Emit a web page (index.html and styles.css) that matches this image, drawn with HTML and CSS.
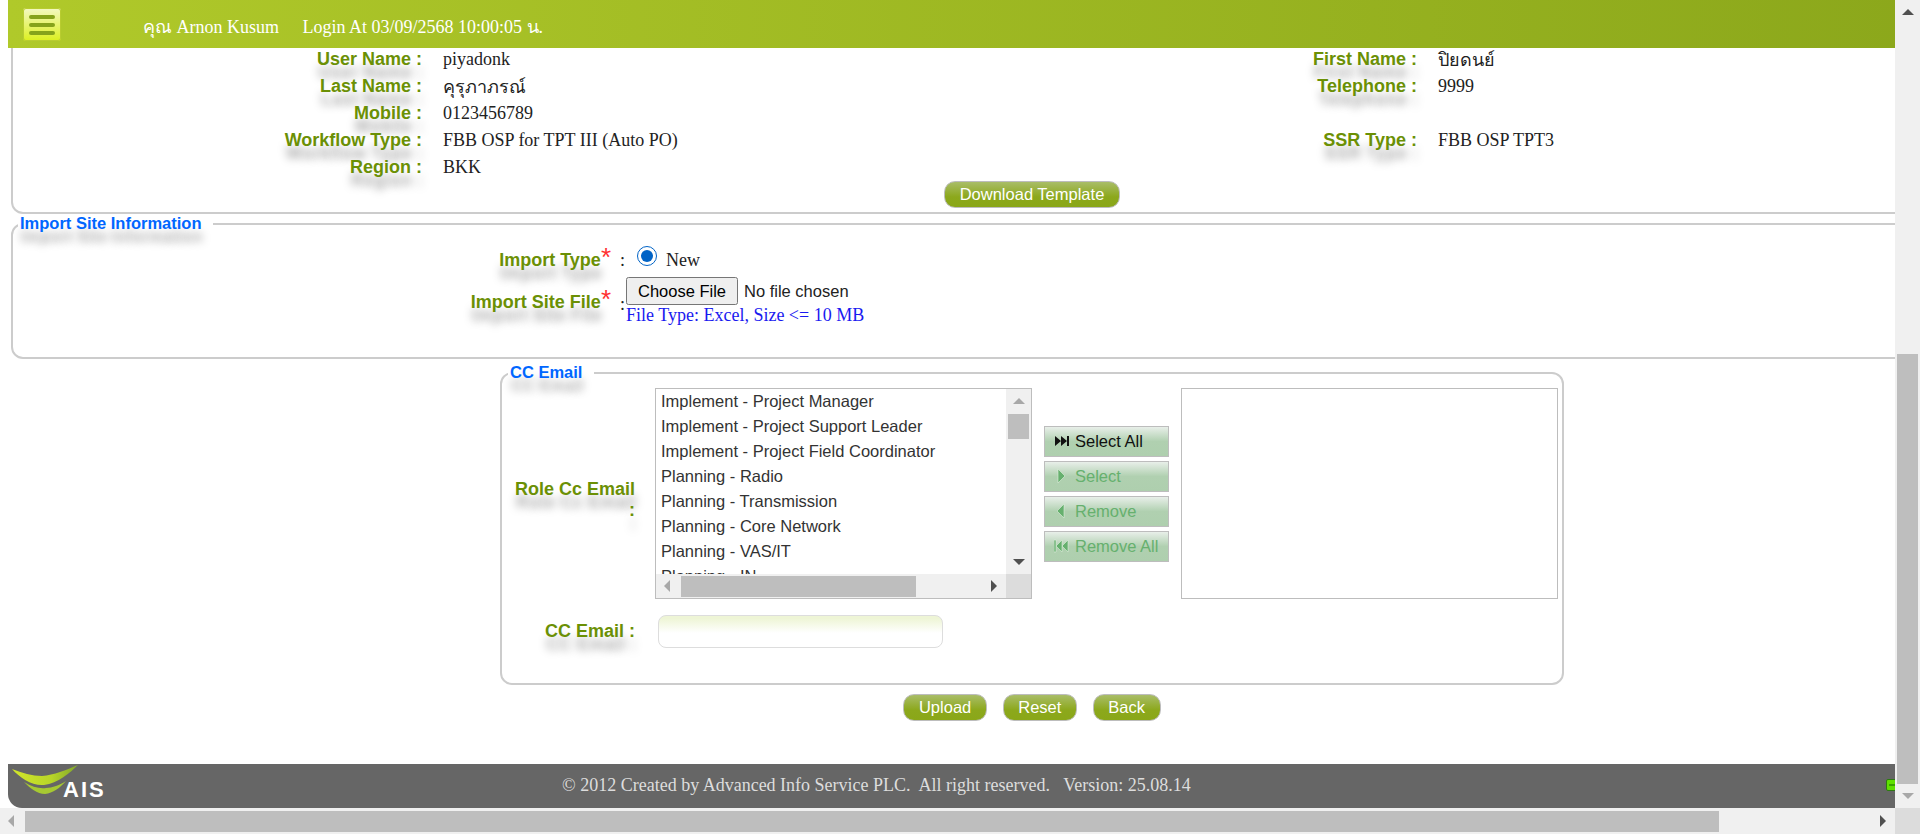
FILE: index.html
```html
<!DOCTYPE html>
<html lang="th">
<head>
  <meta charset="UTF-8">
  <meta name="viewport" content="width=device-width, initial-scale=1.0">
  <title>Import Site</title>
  <link rel="stylesheet" href="styles.css">
</head>
<body>
  <div class="jendela">
    <div class="layar">
      <div class="halaman">
        <div class="header">
          <div class="menu-btn"><span></span><span></span><span></span></div>
          <span class="nama">คุณ Arnon Kusum</span>
          <span class="login">Login At 03/09/2568 10:00:05 น.</span>
        </div>

        <div class="info-box">
          <div class="info-grid">
            <label>User Name :</label><span>piyadonk</span><label>First Name :</label><span>ปิยดนย์</span>
            <label>Last Name :</label><span>คุรุภาภรณ์</span><label>Telephone :</label><span>9999</span>
            <label>Mobile :</label><span>0123456789</span><label></label><span></span>
            <label>Workflow Type :</label><span>FBB OSP for TPT III (Auto PO)</span><label>SSR Type :</label><span>FBB OSP TPT3</span>
            <label>Region :</label><span>BKK</span><label></label><span></span>
          </div>
          <div class="tengah">
            <button class="btn-hijau btn-download">Download Template</button>
          </div>
        </div>

        <fieldset class="kotak kotak-import">
          <legend>Import Site Information</legend>
          <div class="import-grid">
            <label class="lbl-type">Import Type<span class="req">*</span></label>
            <span class="titik titik-type">:</span>
            <div class="nilai-type"><input type="radio" checked name="jenis"><span>New</span></div>
            <label class="lbl-file">Import Site File<span class="req">*</span></label>
            <span class="titik titik-file">:</span>
            <div>
              <input type="file" class="input-file">
              <div class="file-note">File Type: Excel, Size &lt;= 10 MB</div>
            </div>
          </div>
        </fieldset>

        <fieldset class="kotak kotak-cc">
          <legend>CC Email</legend>
          <div class="cc-baris">
            <label class="lbl-role">Role Cc Email :</label>
            <div class="daftar">
              <div class="daftar-isi">
                <div class="opsi">Implement - Project Manager</div>
                <div class="opsi">Implement - Project Support Leader</div>
                <div class="opsi">Implement - Project Field Coordinator</div>
                <div class="opsi">Planning - Radio</div>
                <div class="opsi">Planning - Transmission</div>
                <div class="opsi">Planning - Core Network</div>
                <div class="opsi">Planning - VAS/IT</div>
                <div class="opsi">Planning - IN</div>
              </div>
              <div class="sb-v">
                <i class="pn atas"></i>
                <div class="sb-v-jalur"><div class="sb-v-thumb"></div></div>
                <i class="pn bawah"></i>
              </div>
              <div class="sb-h">
                <i class="pn kiri"></i>
                <div class="sb-h-jalur"><div class="sb-h-thumb"></div></div>
                <i class="pn kanan"></i>
              </div>
              <div class="sudut"></div>
            </div>
            <div class="pindah">
              <button class="btn-pindah aktif">
                <svg width="15" height="14" viewBox="0 0 15 14"><path d="M1 2l6 5-6 5zM7 2l6 5-6 5zM13 2h2v10h-2z" fill="currentColor"/></svg>Select All
              </button>
              <button class="btn-pindah">
                <svg width="15" height="14" viewBox="0 0 15 14"><path d="M4 0l7 7-7 7z" fill="currentColor"/></svg>Select
              </button>
              <button class="btn-pindah">
                <svg width="15" height="14" viewBox="0 0 15 14"><path d="M10 0L3 7l7 7z" fill="currentColor"/></svg>Remove
              </button>
              <button class="btn-pindah">
                <svg width="15" height="14" viewBox="0 0 15 14"><path d="M0 1h2v12H0zM8 1L2 7l6 6zM14 1L8 7l6 6z" fill="currentColor"/></svg>Remove All
              </button>
            </div>
            <div class="daftar-kanan"></div>
          </div>
          <div class="cc-input">
            <label>CC Email :</label>
            <input type="text" class="input-email">
          </div>
        </fieldset>

        <div class="aksi">
          <button class="btn-hijau">Upload</button>
          <button class="btn-hijau">Reset</button>
          <button class="btn-hijau">Back</button>
        </div>

        <div class="footer">
          <svg class="logo" width="100" height="44" viewBox="0 0 100 44">
            <defs>
              <linearGradient id="hijauLogo" x1="0" y1="0" x2="1" y2="0">
                <stop offset="0" stop-color="#d2e62a"/>
                <stop offset="0.6" stop-color="#b8d528"/>
                <stop offset="1" stop-color="#7fa52c"/>
              </linearGradient>
            </defs>
            <path d="M4 5C14 9 24 12 34 12 46 11 58 6 70 1 62 9 50 19 36 21 24 22 12 14 4 5z" fill="url(#hijauLogo)"/>
            <path d="M16 18c8 5 16 7 22 6 6 0 14-3 20-7-6 7-13 12-21 13-8 0-15-6-21-12z" fill="#a6c832"/>
            <text x="55" y="33" class="logo-teks">AIS</text>
          </svg>
          <span class="copy">© 2012 Created by Advanced Info Service PLC.&nbsp; All right reserved. &nbsp; Version: 25.08.14</span>
          <div class="lampu"><span></span></div>
        </div>
      </div>
    </div>

    <div class="sb-utama-v">
      <i class="pn atas"></i>
      <div class="jalur-v"><div class="thumb-v"></div></div>
      <i class="pn bawah pudar"></i>
    </div>
    <div class="sb-utama-h">
      <i class="pn kiri pudar"></i>
      <div class="jalur-h"><div class="thumb-h"></div></div>
      <i class="pn kanan"></i>
    </div>
    <div class="sudut-utama"></div>
  </div>
</body>
</html>
```

FILE: styles.css
```css
html, body {
  margin: 0;
  height: 100%;
  overflow: hidden;
}
body {
  background-color: #ffffff;
  font-family: "Liberation Serif", "Noto Sans", "DejaVu Serif", serif;
  font-size: 18px;
  color: #222;
}
.jendela {
  display: grid;
  grid-template-columns: 1fr 25px;
  grid-template-rows: 1fr 26px;
  width: 1920px;
  height: 834px;
}
.layar {
  overflow: hidden;
}
.halaman {
  width: 2048px;
  padding: 0 8px;
  height: 808px;
  display: flex;
  flex-direction: column;
}

/* header */
.header {
  position: relative;
  z-index: 2;
  flex: none;
  height: 48px;
  display: flex;
  background: linear-gradient(to right, #b0c92a, #89a51a);
  color: #ffffff;
}
.menu-btn {
  width: 38px;
  height: 33px;
  box-sizing: border-box;
  margin: 8px 0 0 15px;
  padding: 7px 6px 0;
  border-radius: 3px;
  background: linear-gradient(to bottom, #f3f8c4, #dcf01e);
  box-shadow: 0 0 0 1px #b8cc30 inset;
}
.menu-btn span {
  display: block;
  height: 4px;
  margin-bottom: 4px;
  border-radius: 2px;
  background-color: #86a31b;
}
.nama {
  margin: 12px 0 0 82px;
  width: 159.5px;
}
.login {
  margin-top: 12px;
}

/* label */
label {
  font-family: "Liberation Sans", Arial, sans-serif;
  font-weight: bold;
  color: #6b9005;
  text-shadow: 1px 13px 8px #aaaaaa;
}
.info-box {
  flex: none;
  margin: -2px 3px 0;
  height: 168px;
  box-sizing: border-box;
  border: 2px solid #cccccc;
  border-top: none;
  border-radius: 0 0 12px 12px;
}
.info-grid {
  display: grid;
  grid-template-columns: 409px 774px 179px 1fr;
  grid-auto-rows: 27px;
  column-gap: 21px;
  align-items: center;
}
.info-grid label {
  text-align: right;
}
.tengah {
  text-align: center;
}
.btn-hijau {
  height: 27px;
  padding: 0 14.5px;
  border: 1px solid #bdbdbd;
  border-radius: 11px;
  background: linear-gradient(to bottom, #a9bd68, #8ca81c 60%, #8aa718);
  color: #ffffff;
  font-family: "Liberation Sans", Arial, sans-serif;
  font-size: 16.5px;
}
.btn-download {
  width: 176px;
  padding: 0;
}

/* fieldset */
.kotak {
  margin: 0;
  padding: 0;
  border: 2px solid #cccccc;
  border-radius: 12px;
  min-width: 0;
}
.kotak legend {
  font-family: "Liberation Sans", Arial, sans-serif;
  font-size: 16.5px;
  font-weight: bold;
  color: #0066ff;
  text-shadow: 1px 13px 8px #aaaaaa;
}
.kotak-import {
  flex: none;
  margin: 0 3px;
  height: 145px;
  box-sizing: border-box;
}
.kotak-import legend {
  margin-left: 5px;
  padding: 0 11px 0 2px;
}
.import-grid {
  display: grid;
  grid-template-columns: 598px 15px 1fr;
  grid-template-rows: 33px auto;
  padding-top: 11px;
}
.import-grid label {
  text-align: right;
}
.req {
  color: #ff3030;
  font-family: "Liberation Sans", Arial, sans-serif;
  font-weight: normal;
  font-size: 26px;
  line-height: 10px;
  text-shadow: none;
}
.titik {
  padding-left: 9px;
  color: #222;
}
.lbl-type, .titik-type {
  padding-top: 6px;
}
.lbl-file {
  padding-top: 15px;
}
.titik-file {
  padding-top: 17px;
}
.nilai-type {
  display: flex;
  align-items: flex-start;
  margin-left: 11px;
}
.nilai-type input {
  width: 20px;
  height: 20px;
  margin: 2px 9px 0 0;
  accent-color: #0063c6;
}
.nilai-type span {
  margin-top: 6px;
}
.input-file {
  display: block;
  font-family: "Liberation Sans", Arial, sans-serif;
  font-size: 16.5px;
  color: #222;
}
.input-file::file-selector-button {
  width: 112px;
  height: 28px;
  margin-right: 6px;
  font: inherit;
}
.file-note {
  color: #1a1af0;
  line-height: 20px;
}
.kotak-cc {
  flex: none;
  width: 1064px;
  height: 322px;
  box-sizing: border-box;
  margin: 4px auto 0;
}
.kotak-cc legend {
  margin-left: 6px;
  padding: 0 12px 0 2px;
}
.cc-baris {
  display: flex;
  align-items: center;
  margin-top: 6px;
}
.lbl-role {
  width: 125px;
  padding: 12px 0 0 8px;
  text-align: right;
  line-height: 21px;
}
.daftar {
  position: relative;
  width: 377px;
  height: 211px;
  box-sizing: border-box;
  margin-left: 20px;
  border: 1px solid #bdbdbd;
  font-family: "Liberation Sans", Arial, sans-serif;
  font-size: 16.5px;
  color: #333;
  display: grid;
  grid-template-columns: 1fr 25px;
  grid-template-rows: 185px 24px;
  overflow: hidden;
}
.daftar-isi {
  overflow: hidden;
  padding: 0 0 0 5px;
}
.opsi {
  height: 25px;
  line-height: 25px;
  white-space: nowrap;
}
.sb-v, .sb-h {
  background-color: #f0f0f0;
  display: flex;
}
.sb-v {
  flex-direction: column;
  align-items: center;
}
.sb-v-jalur, .jalur-v {
  flex: 1;
  width: 100%;
}
.sb-v-thumb {
  width: 21px;
  height: 25px;
  margin: 2px 2px 0;
  background-color: #bebebe;
}
.sb-h {
  align-items: center;
}
.sb-h-jalur {
  flex: 1;
  height: 100%;
}
.sb-h-thumb {
  width: 235px;
  height: 21px;
  margin: 2px 0 0 2px;
  background-color: #bebebe;
}
.sudut, .sudut-utama {
  background-color: #dcdcdc;
}

/* panah scrollbar */
.pn {
  flex: none;
  display: block;
  width: 0;
  height: 0;
  border-style: solid;
  border-color: transparent;
}
.atas {
  margin: 9px 0 8px;
  border-width: 0 6px 6px;
  border-bottom-color: #a8a8a8;
}
.bawah {
  margin: 8px 0 9px;
  border-width: 6px 6px 0;
  border-top-color: #505050;
}
.kiri {
  margin: 0 9px 0 8px;
  border-width: 6px 6px 6px 0;
  border-right-color: #a8a8a8;
}
.kanan {
  margin: 0 9px;
  border-width: 6px 0 6px 6px;
  border-left-color: #505050;
}

/* tombol pindah */
.pindah {
  display: flex;
  flex-direction: column;
  gap: 4px;
  width: 125px;
  margin: 0 12px;
}
.btn-pindah {
  height: 31px;
  padding: 0 0 0 9px;
  display: flex;
  align-items: center;
  gap: 6px;
  border: 1px solid #bdbdbd;
  background: linear-gradient(to bottom, #e8efe9, #b0d0b0 50%, #aecfae);
  color: #66b06e;
  font-family: "Liberation Sans", Arial, sans-serif;
  font-size: 16.5px;
  white-space: nowrap;
}
.btn-pindah svg {
  stroke: #dfeedd;
  stroke-width: 0.6;
}
.btn-pindah.aktif {
  color: #111;
}
.btn-pindah.aktif svg {
  stroke: none;
}
.daftar-kanan {
  width: 377px;
  height: 211px;
  box-sizing: border-box;
  border: 1px solid #bdbdbd;
}
.cc-input {
  display: flex;
  align-items: center;
  margin-top: 16px;
}
.cc-input label {
  width: 133px;
  text-align: right;
}
.input-email {
  width: 285px;
  height: 33px;
  box-sizing: border-box;
  margin-left: 23px;
  border: 1px solid #dddddd;
  border-radius: 8px;
  background: linear-gradient(to bottom, #eef5d6 8%, #ffffff 55%);
}
.aksi {
  flex: none;
  display: flex;
  justify-content: center;
  gap: 16px;
  margin-top: 9px;
}

/* footer */
.footer {
  position: relative;
  flex: none;
  height: 44px;
  margin-top: 43px;
  display: flex;
  background-color: #666666;
  border-radius: 0 0 0 14px;
}
.logo {
  flex: none;
}
.logo-teks {
  font-family: "Liberation Sans", Arial, sans-serif;
  font-weight: bold;
  font-size: 22px;
  letter-spacing: 2px;
  fill: #ffffff;
}
.copy {
  margin: 11px 0 0 454px;
  color: #dddddd;
  white-space: nowrap;
}
.lampu {
  position: absolute;
  left: 1878px;
  top: 15px;
  width: 18px;
  height: 12px;
  box-sizing: border-box;
  border: 1px solid #2c7a10;
  border-radius: 2px;
  background-color: #5fe000;
}
.lampu span {
  display: block;
  width: 6px;
  height: 2px;
  margin: 4px 0 0 2px;
  background-color: #3aa000;
}

/* scrollbar halaman */
.sb-utama-v, .sb-utama-h {
  background-color: #f0f0f0;
  display: flex;
}
.sb-utama-v {
  flex-direction: column;
  align-items: center;
}
.sb-utama-v .atas {
  border-bottom-color: #505050;
}
.sb-utama-v .pudar {
  border-top-color: #a8a8a8;
}
.sb-utama-h .pudar {
  border-right-color: #a8a8a8;
}
.thumb-v {
  width: 21px;
  height: 430px;
  margin: 331px 2px 0;
  background-color: #bebebe;
}
.sb-utama-h {
  align-items: center;
}
.jalur-h {
  flex: 1;
  height: 100%;
}
.thumb-h {
  width: 1694px;
  height: 21px;
  margin-top: 3px;
  margin-left: 2px;
  background-color: #bebebe;
}
```
